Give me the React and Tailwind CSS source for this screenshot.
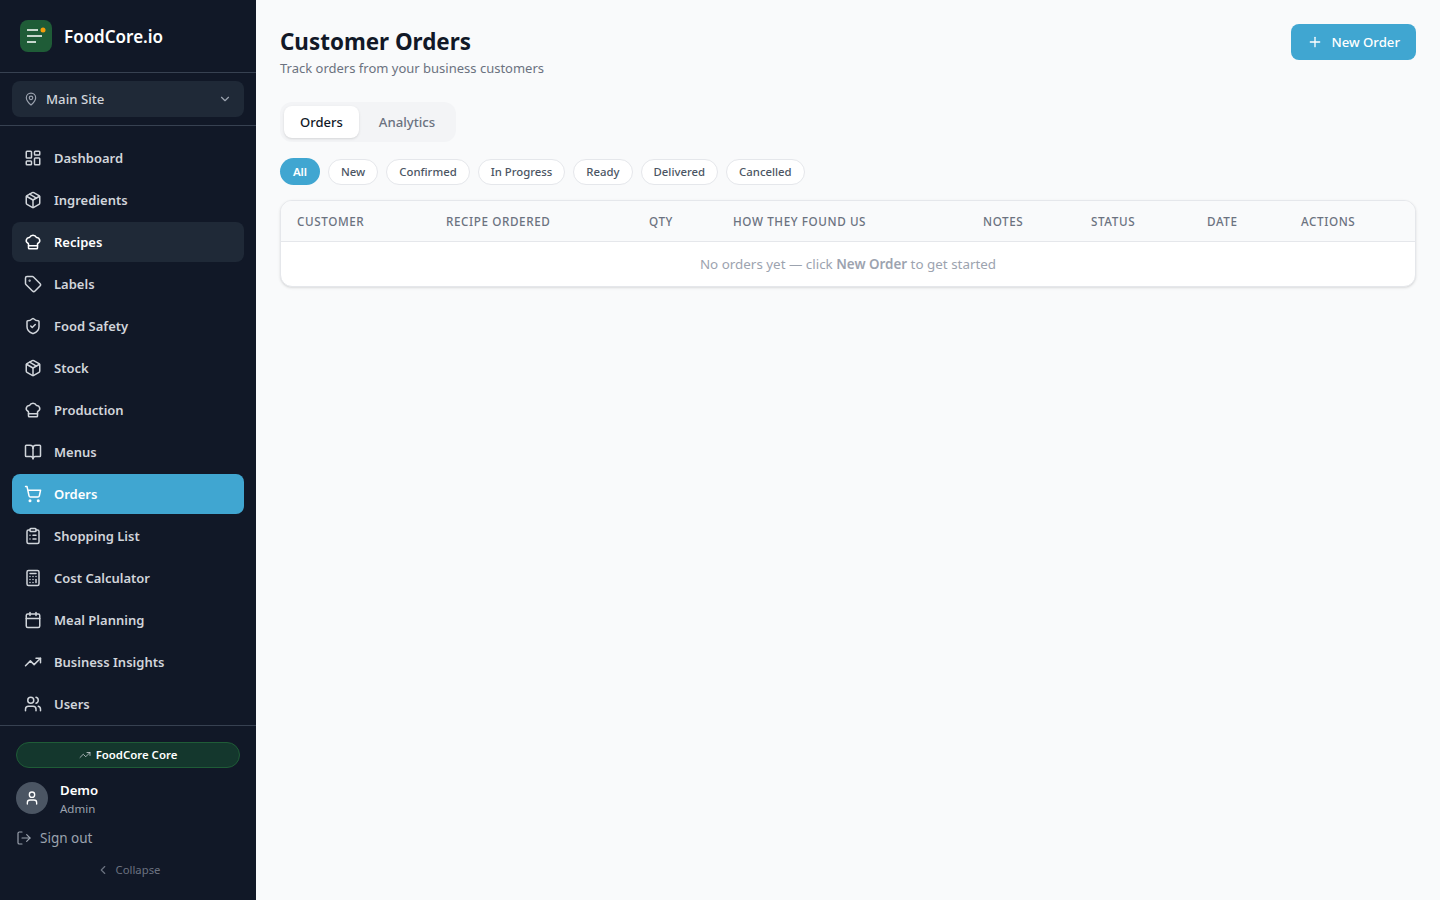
import {
  LayoutDashboard,
  Package,
  ChefHat,
  Tag,
  ShieldCheck,
  BookOpen,
  ShoppingCart,
  ClipboardList,
  Calculator,
  Calendar,
  TrendingUp,
  Users,
  MapPin,
  ChevronDown,
  ChevronLeft,
  LogOut,
  User,
  Plus,
} from 'lucide-react'

const navItems = [
  { label: 'Dashboard', icon: LayoutDashboard },
  { label: 'Ingredients', icon: Package },
  { label: 'Recipes', icon: ChefHat, hover: true },
  { label: 'Labels', icon: Tag },
  { label: 'Food Safety', icon: ShieldCheck },
  { label: 'Stock', icon: Package },
  { label: 'Production', icon: ChefHat },
  { label: 'Menus', icon: BookOpen },
  { label: 'Orders', icon: ShoppingCart, active: true },
  { label: 'Shopping List', icon: ClipboardList },
  { label: 'Cost Calculator', icon: Calculator },
  { label: 'Meal Planning', icon: Calendar },
  { label: 'Business Insights', icon: TrendingUp },
  { label: 'Users', icon: Users },
]

const filters = ['New', 'Confirmed', 'In Progress', 'Ready', 'Delivered', 'Cancelled']

const columns = [
  { label: 'Customer', width: 'w-[149px]' },
  { label: 'Recipe Ordered', width: 'w-[203px]' },
  { label: 'Qty', width: 'w-[84px]' },
  { label: 'How They Found Us', width: 'w-[250px]' },
  { label: 'Notes', width: 'w-[108px]' },
  { label: 'Status', width: 'w-[116px]' },
  { label: 'Date', width: 'w-[94px]' },
  { label: 'Actions', width: 'w-[130px]' },
]

function Logo() {
  return (
    <div className="w-8 h-8 rounded-lg bg-[#1f5c37] flex items-center justify-center shrink-0">
      <svg width="32" height="32" viewBox="0 0 32 32" fill="none">
        <path d="M7 10h11M7 16h15M7 22h9" stroke="white" strokeWidth="1.7" />
        <circle cx="23" cy="10" r="2.5" fill="#f59e0b" />
      </svg>
    </div>
  )
}

function Sidebar() {
  return (
    <aside className="w-64 h-screen shrink-0 bg-[#111827] flex flex-col">
      <div className="h-[73px] border-b border-[#374151] px-5 flex items-center gap-3">
        <Logo />
        <span className="mt-0.5 text-[17px] font-semibold text-white">FoodCore.io</span>
      </div>

      <div className="h-[53px] border-b border-[#374151] px-3 pt-2">
        <button className="w-full h-9 rounded-lg bg-[#1f2937] px-3 flex items-center gap-2 text-[13.2px] font-medium text-[#d1d5db]">
          <MapPin className="w-3.5 h-3.5 text-[#9ca3af]" />
          <span className="mt-0.5 flex-1 text-left">Main Site</span>
          <ChevronDown className="w-3.5 h-3.5 text-[#9ca3af]" />
        </button>
      </div>

      <nav className="px-3 pt-3 flex flex-col gap-0.5 h-[600px] border-b border-[#374151]">
        {navItems.map(({ label, icon: Icon, active, hover }) => (
          <div
            key={label}
            className={`h-10 shrink-0 rounded-lg px-3 flex items-center gap-3 text-[13px] font-semibold ${
              active
                ? 'bg-[#40a6d1] text-white'
                : hover
                  ? 'bg-[#1f2937] text-white'
                  : 'text-[#d1d5db]'
            }`}
          >
            <Icon className="w-[18px] h-[18px] shrink-0" strokeWidth={2} />
            <span className="mt-0.5">{label}</span>
          </div>
        ))}
      </nav>

      <div className="px-4 pt-4">
        <div className="h-[26px] rounded-full bg-[#14372d] border border-[#1f5c37] flex items-center justify-center gap-[5px] text-[11.4px] font-semibold text-white">
          <TrendingUp className="w-3 h-3 text-[#d1d5db]" strokeWidth={1.5} />
          FoodCore Core
        </div>
        <div className="mt-[13px] flex items-start gap-3">
          <div className="mt-px w-8 h-8 rounded-full bg-[#4b5563] flex items-center justify-center">
            <User className="w-4 h-4 text-white" />
          </div>
          <div>
            <div className="text-[13.2px] leading-[18px] font-semibold text-white">Demo</div>
            <div className="mt-px text-[11.5px] leading-[18px] text-[#9ca3af]">Admin</div>
          </div>
        </div>
        <div className="mt-2 h-6 flex items-center gap-2 text-[13.5px] text-[#9ca3af]">
          <LogOut className="w-4 h-4" strokeWidth={1.75} />
          Sign out
        </div>
        <div className="mt-[10px] h-5 flex items-center justify-center gap-[6px] text-[11.3px] text-[#6b7280]">
          <ChevronLeft className="w-3.5 h-3.5" />
          Collapse
        </div>
      </div>
    </aside>
  )
}

function OrdersTable() {
  return (
    <div className="mt-[15px] bg-white rounded-xl border border-[#e5e7eb] shadow-sm overflow-hidden">
      <table className="w-full table-fixed">
        <thead>
          <tr className="bg-[#f9fafb] border-b border-[#e5e7eb]">
            {columns.map((col) => (
              <th
                key={col.label}
                className={`${col.width} h-10 px-4 pt-0.5 text-left text-[11.7px] font-medium uppercase tracking-wider text-[#6b7280]`}
              >
                {col.label}
              </th>
            ))}
          </tr>
        </thead>
        <tbody>
          <tr>
            <td colSpan={8} className="h-[45px] text-center text-[13.4px] text-[#9ca3af]">
              No orders yet — click <span className="font-semibold">New Order</span> to get started
            </td>
          </tr>
        </tbody>
      </table>
    </div>
  )
}

export default function App() {
  return (
    <div className="flex h-screen bg-[#f9fafb] font-['Noto_Sans',sans-serif] overflow-hidden">
      <Sidebar />
      <main className="flex-1 px-6 pt-6">
        <div className="flex items-start justify-between">
          <div className="pt-0.5">
            <h1 className="text-[22.4px] leading-8 font-bold text-[#111827]">Customer Orders</h1>
            <p className="text-[13px] leading-5 text-[#6b7280]">Track orders from your business customers</p>
          </div>
          <button className="h-9 px-4 rounded-lg bg-[#40a6d1] text-white text-[13.2px] font-medium flex items-center gap-2">
            <Plus className="w-4 h-4" />
            <span className="mt-0.5">New Order</span>
          </button>
        </div>

        <div className="mt-6 w-[176px] h-10 p-1 gap-1 rounded-xl bg-[#f3f4f6] flex">
          <div className="px-4 pt-0.5 rounded-lg bg-white shadow-sm flex items-center text-[13px] font-medium text-[#111827]">Orders</div>
          <div className="px-4 pt-0.5 flex items-center text-[13.2px] font-medium text-[#6b7280]">Analytics</div>
        </div>

        <div className="mt-4 flex items-center gap-2">
          <div className="h-[27px] w-10 justify-center rounded-full bg-[#40a6d1] flex items-center text-[11.5px] font-semibold text-white">All</div>
          {filters.map((f) => (
            <div
              key={f}
              className="h-[26px] px-3 rounded-full bg-white border border-[#e5e7eb] flex items-center text-[11.35px] font-medium text-[#4b5563]"
            >
              {f}
            </div>
          ))}
        </div>

        <OrdersTable />
      </main>
    </div>
  )
}
